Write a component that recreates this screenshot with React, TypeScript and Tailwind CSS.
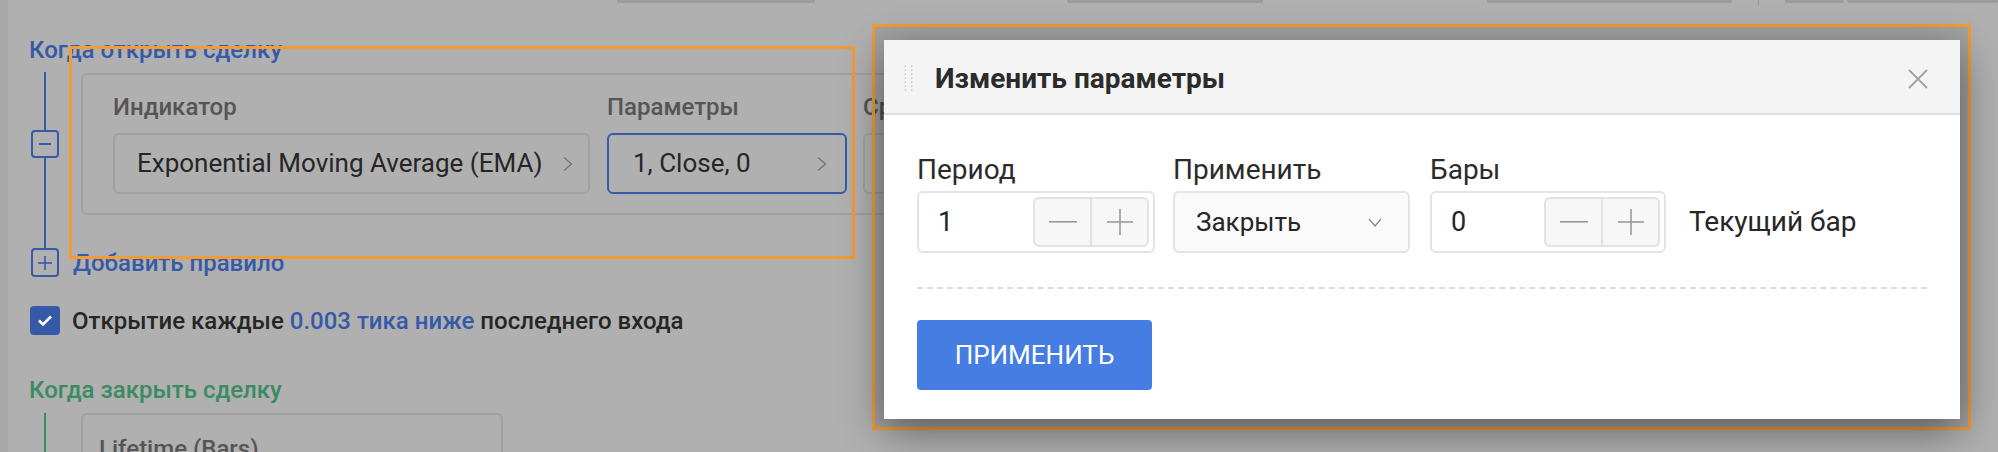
import React from 'react';

const Chevron = () => (
  <svg width="12" height="16" viewBox="0 0 12 16" fill="none">
    <path d="M2 1.5 L9.5 8 L2 14.5" stroke="#707070" strokeWidth="1.3" />
  </svg>
);

const Stepper = () => (
  <div className="flex w-[116px] h-[50px] border-2 border-[#e2e2e2] bg-[#f7f7f7] rounded-[6px]">
    <div className="flex-1 flex items-center justify-center">
      <svg width="28" height="2" viewBox="0 0 28 2"><rect width="28" height="1.6" fill="#9a9a9a" /></svg>
    </div>
    <div className="flex-1 flex items-center justify-center border-l-2 border-[#e2e2e2]">
      <svg width="26" height="26" viewBox="0 0 26 26">
        <rect x="0" y="12.2" width="26" height="1.6" fill="#9a9a9a" />
        <rect x="12.2" y="0" width="1.6" height="26" fill="#9a9a9a" />
      </svg>
    </div>
  </div>
);

export default function App() {
  return (
    <div className="relative w-[1998px] h-[452px] overflow-hidden bg-[#b0b0b0] font-['Roboto',sans-serif]">
      <div className="flex h-full">
        <div className="w-[8px] shrink-0 bg-[#a9a9a9]" />
        <div className="flex-1 flex flex-col">
          {/* bottom edges of the row above */}
          <div className="flex h-[3px] shrink-0">
            <div className="ml-[609px] w-[198px] bg-[#9c9c9c] rounded-b-[2px]" />
            <div className="ml-[252px] w-[196px] bg-[#9c9c9c] rounded-b-[2px]" />
            <div className="ml-[224px] w-[245px] bg-[#9c9c9c] rounded-b-[2px]" />
            <div className="ml-[26px] w-[1px] h-[6px] bg-[#9c9c9c]" />
            <div className="ml-[26px] w-[59px] bg-[#9c9c9c] rounded-b-[2px]" />
            <div className="ml-[3px] w-[151px] bg-[#9c9c9c] rounded-b-[2px]" />
          </div>

          <div className="pl-[21px]">
            <div className="mt-[33px] text-[24px] leading-[28px] font-medium text-[#3659a8]">Когда открыть сделку</div>

            <div className="flex mt-[8px]">
              <div className="w-[28px] ml-[2px] h-[176px] flex flex-col items-center">
                <div className="w-[2px] h-[58px] bg-[#3659a8]" />
                <div className="w-[28px] h-[28px] border-2 border-[#3659a8] rounded-[4px] flex items-center justify-center">
                  <div className="w-[12px] h-[2px] bg-[#3659a8]" />
                </div>
                <div className="w-[2px] flex-1 bg-[#3659a8]" />
              </div>
              <div className="ml-[22px] mt-[1px] w-[1040px] h-[142px] border-2 border-[#a1a1a1] rounded-[6px] pl-[30px] pt-[18px] flex gap-[17px]">
                <div className="w-[477px]">
                  <div className="text-[24px] leading-[28px] font-medium text-[#555555]">Индикатор</div>
                  <div className="mt-[12px] h-[61px] border-2 border-[#a1a1a1] rounded-[6px] flex items-center justify-between pl-[22px] pr-[14px] text-[26px] text-[#262626]">
                    <span>Exponential Moving Average (EMA)</span>
                    <Chevron />
                  </div>
                </div>
                <div className="w-[240px]">
                  <div className="text-[24px] leading-[28px] font-medium text-[#555555]">Параметры</div>
                  <div className="mt-[12px] h-[61px] border-2 border-[#3659a8] rounded-[6px] flex items-center justify-between pl-[24px] pr-[17px] text-[26px] text-[#262626]">
                    <span>1, Close, 0</span>
                    <Chevron />
                  </div>
                </div>
                <div className="w-[240px] ml-[-1px]">
                  <div className="text-[24px] leading-[28px] font-medium text-[#555555]">Сравнение</div>
                  <div className="mt-[12px] h-[61px] border-2 border-[#a1a1a1] rounded-[6px]" />
                </div>
              </div>
            </div>

            <div className="flex items-center">
              <div className="w-[28px] h-[29px] ml-[2px] border-2 border-[#3659a8] rounded-[4px] flex items-center justify-center">
                <svg width="14" height="14" viewBox="0 0 14 14">
                  <rect x="0" y="6.2" width="14" height="1.6" fill="#3659a8" />
                  <rect x="6.2" y="0" width="1.6" height="14" fill="#3659a8" />
                </svg>
              </div>
              <span className="ml-[14px] text-[24px] leading-[28px] font-medium text-[#3659a8]">Добавить правило</span>
            </div>

            <div className="flex items-center mt-[29px]">
              <div className="w-[30px] h-[29px] ml-[1px] rounded-[4px] bg-[#3659a8] flex items-center justify-center">
                <svg width="16" height="13" viewBox="0 0 16 13" fill="none">
                  <path d="M2 6.5 L6 10.5 L14 2.5" stroke="#ffffff" strokeWidth="2.6" />
                </svg>
              </div>
              <span className="ml-[12px] text-[24px] leading-[28px] font-medium text-[#262626]">
                Открытие каждые <span className="text-[#3659a8]">0.003 тика ниже</span> последнего входа
              </span>
            </div>

            <div className="mt-[41px] text-[24px] leading-[28px] font-medium text-[#3a8a62]">Когда закрыть сделку</div>

            <div className="flex mt-[9px]">
              <div className="w-[28px] ml-[2px] flex justify-center">
                <div className="w-[2px] h-[60px] bg-[#3a8a62]" />
              </div>
              <div className="ml-[22px] w-[422px] h-[90px] border-2 border-[#a1a1a1] rounded-[6px] pl-[16px] pt-[20px]">
                <div className="text-[24px] leading-[28px] font-medium text-[#555555]">Lifetime (Bars)</div>
              </div>
            </div>
          </div>
        </div>
      </div>

      {/* annotation frame 1 */}
      <div className="absolute left-[69px] top-[46px] w-[786px] h-[213px] border-[3px] border-[#f39b35]" />

      {/* annotation frame 2 */}
      <div className="absolute left-[872px] top-[24px] w-[1099px] h-[406px] border-[3px] border-[#f39b35] bg-[rgba(0,0,0,0.08)]" />

      {/* modal */}
      <div className="absolute left-[884px] top-[40px] w-[1076px] h-[379px] bg-white shadow-[0_12px_40px_rgba(0,0,0,0.45)] flex flex-col">
        <div className="h-[75px] shrink-0 bg-[#f4f4f4] border-b-2 border-[#dedede] flex items-center pt-[4px] pl-[20px] pr-[32px]">
          <svg width="10" height="27" viewBox="0 0 10 27">
            {[0, 1, 2, 3, 4, 5, 6].map((i) => (
              <g key={i}>
                <rect x="0.5" y={0.5 + i * 4} width="1.4" height="1.4" fill="#c2c2c2" />
                <rect x="7" y={0.5 + i * 4} width="1.4" height="1.4" fill="#c2c2c2" />
              </g>
            ))}
          </svg>
          <span className="ml-[21px] text-[28px] leading-[32px] font-bold text-[#2b2b2b]">Изменить параметры</span>
          <svg className="ml-auto" width="20" height="20" viewBox="0 0 20 20" fill="none">
            <path d="M1 1 L19 19 M19 1 L1 19" stroke="#9ca2a8" strokeWidth="1.8" />
          </svg>
        </div>

        <div className="flex-1 px-[33px] pt-[40px] text-[26px] text-[#262626]">
          <div className="flex items-end">
            <div className="w-[238px]">
              <div className="text-[28px] leading-[30px] mb-[6px] text-[#2b2b2b]">Период</div>
              <div className="h-[62px] border-2 border-[#e4e4e4] rounded-[6px] flex items-center justify-between pl-[19px] pr-[4px] text-[27px]">
                <span>1</span>
                <Stepper />
              </div>
            </div>
            <div className="w-[237px] ml-[18px]">
              <div className="text-[28px] leading-[30px] mb-[6px] text-[#2b2b2b]">Применить</div>
              <div className="h-[62px] border-2 border-[#e4e4e4] bg-[#fafafa] rounded-[6px] flex items-center justify-between pl-[21px] pr-[26px]">
                <span>Закрыть</span>
                <svg width="14" height="9" viewBox="0 0 14 9" fill="none">
                  <path d="M1 1 L7 8 L13 1" stroke="#8a8a8a" strokeWidth="1.3" />
                </svg>
              </div>
            </div>
            <div className="w-[236px] ml-[20px]">
              <div className="text-[28px] leading-[30px] mb-[6px] text-[#2b2b2b]">Бары</div>
              <div className="h-[62px] border-2 border-[#e4e4e4] rounded-[6px] flex items-center justify-between pl-[19px] pr-[4px] text-[27px]">
                <span>0</span>
                <Stepper />
              </div>
            </div>
            <div className="ml-[23px] h-[62px] flex items-center text-[28px]">Текущий бар</div>
          </div>

          <div className="mt-[34px] border-t-2 border-dashed border-[#dcdcdc]" />

          <button className="mt-[31px] w-[235px] h-[70px] bg-[#467de3] rounded-[4px] text-white text-[26px] flex items-center justify-center">
            ПРИМЕНИТЬ
          </button>
        </div>
      </div>
    </div>
  );
}
